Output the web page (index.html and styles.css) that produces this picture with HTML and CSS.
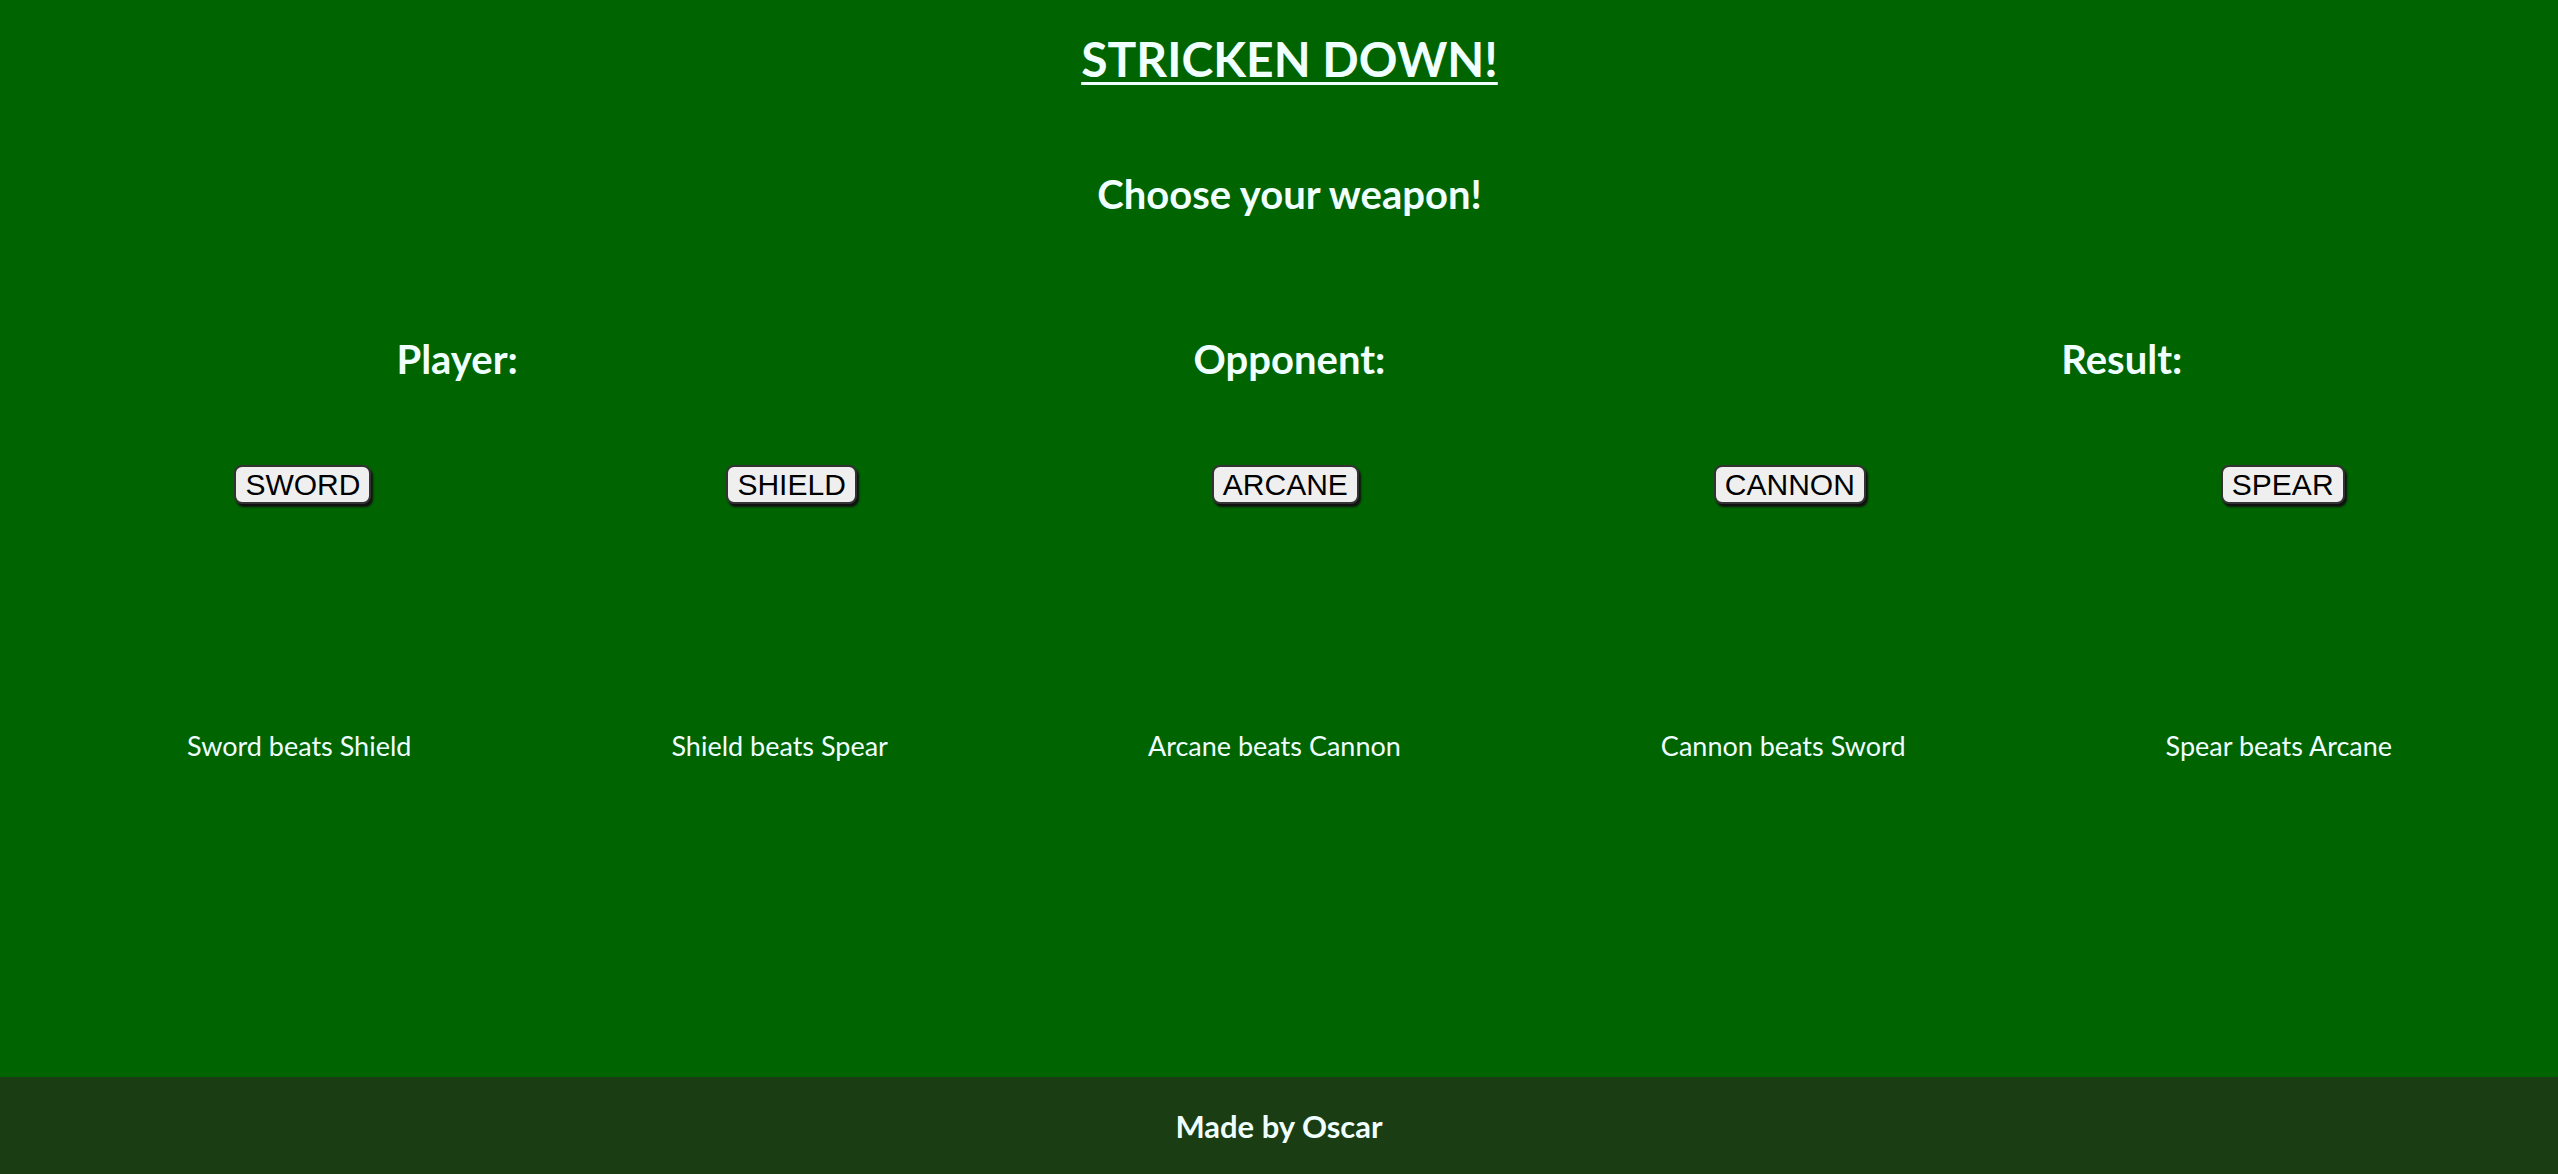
FILE: index.html
```html
<!DOCTYPE html>
<html lang="en">
<head>
<meta charset="utf-8">
<title>Stricken Down!</title>
<link rel="stylesheet" href="styles.css">
</head>
<body>
<div class="page">
  <main class="main">
    <h1 class="title">STRICKEN DOWN!</h1>
    <h2 class="subtitle">Choose your weapon!</h2>
    <div class="scores">
      <div class="score">Player:</div>
      <div class="score">Opponent:</div>
      <div class="score">Result:</div>
    </div>
    <div class="weapons">
      <button class="weapon">SWORD</button>
      <button class="weapon">SHIELD</button>
      <button class="weapon">ARCANE</button>
      <button class="weapon">CANNON</button>
      <button class="weapon">SPEAR</button>
    </div>
    <div class="rules">
      <p class="rule">Sword beats Shield</p>
      <p class="rule">Shield beats Spear</p>
      <p class="rule">Arcane beats Cannon</p>
      <p class="rule">Cannon beats Sword</p>
      <p class="rule">Spear beats Arcane</p>
    </div>
  </main>
  <footer class="footer">Made by Oscar</footer>
</div>
</body>
</html>
```
FILE: styles.css
```css
html, body {
  margin: 0;
  padding: 0;
}
body {
  background: #006400;
  color: #f0ffff;
  font-family: "Lato", "Open Sans", sans-serif;
}
.page {
  min-height: 100vh;
  display: flex;
  flex-direction: column;
}
.main {
  flex: 1;
  padding-left: 21px;
  text-align: center;
}
.title {
  margin: 35px 0 0;
  font-size: 48px;
  line-height: 48px;
  font-weight: 700;
  text-decoration: underline;
  text-decoration-thickness: 3px;
  text-underline-offset: 5px;
}
.subtitle {
  margin: 87px 0 0;
  font-size: 40px;
  line-height: 48px;
  font-weight: 700;
}
.scores {
  margin: 117px auto 0;
  width: 2497px;
  display: grid;
  grid-template-columns: repeat(3, 1fr);
  font-size: 40px;
  line-height: 48px;
  font-weight: 700;
}
.weapons {
  margin-top: 82px;
  display: flex;
  justify-content: center;
  align-items: flex-start;
  gap: 355px;
}
.weapon {
  font-family: "Liberation Sans", Arial, sans-serif;
  font-size: 30px;
  line-height: 35px;
  padding: 0 9px;
  color: #000;
  background: #efefef;
  border: 2px solid #333;
  border-radius: 8px;
  box-shadow: 2px 3px 2px #111;
}
.rules {
  margin-top: 226px;
  display: flex;
  justify-content: center;
  gap: 260px;
}
.rule {
  margin: 0;
  font-size: 27px;
  line-height: 32px;
}
.footer {
  height: 97px;
  background: #1b3d13;
  display: flex;
  align-items: center;
  justify-content: center;
  font-size: 31px;
  font-weight: 700;
}
```
